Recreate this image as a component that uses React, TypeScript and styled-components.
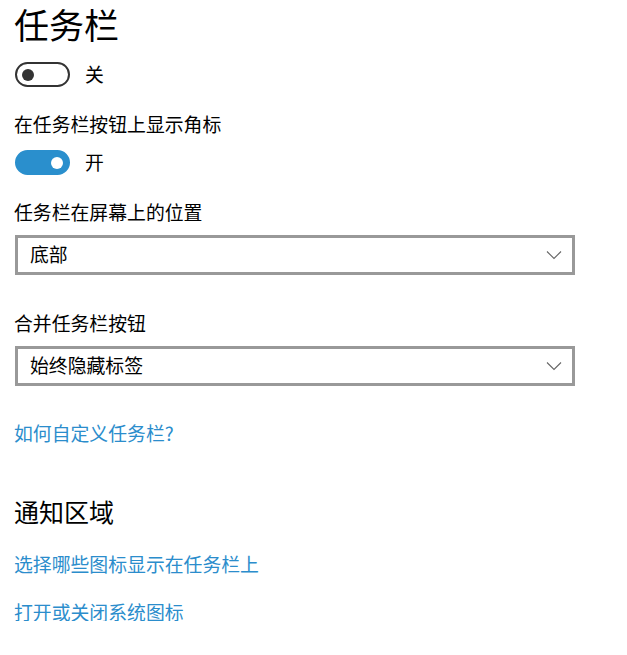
import React from "react";
import styled, { createGlobalStyle } from "styled-components";

const Global = createGlobalStyle`
  html, body { margin: 0; padding: 0; background: #fff; }
  body { font-family: "Noto Sans CJK SC", "Noto Sans", sans-serif; color: #000; }
`;

const Page = styled.div`
  display: flex;
  flex-direction: column;
  align-items: flex-start;
  padding: 0 0 0 14px;
  width: 627px;
  box-sizing: border-box;
`;

const Title = styled.h1<{ $size: number; $lh: number; $mt: number }>`
  margin: ${(p) => p.$mt}px 0 0 0;
  font-size: ${(p) => p.$size}px;
  line-height: ${(p) => p.$lh}px;
  font-weight: 400;
`;

const Label = styled.div<{ $mt: number }>`
  margin-top: ${(p) => p.$mt}px;
  font-size: 18.85px;
  line-height: 19px;
`;

const ToggleRow = styled.div<{ $mt: number }>`
  margin-top: ${(p) => p.$mt}px;
  display: flex;
  align-items: center;
  gap: 15px;
  padding-left: 1px;
  font-size: 18.85px;
  line-height: 19px;
`;

const ToggleText = styled.span`
  position: relative;
  top: -1px;
`;

const Track = styled.div<{ $on: boolean }>`
  width: 55px;
  height: 25px;
  box-sizing: border-box;
  border-radius: 13px;
  border: 2px solid ${(p) => (p.$on ? "#2a8fcd" : "#333")};
  background: ${(p) => (p.$on ? "#2a8fcd" : "#fff")};
  display: flex;
  align-items: center;
  justify-content: ${(p) => (p.$on ? "flex-end" : "flex-start")};
  padding: 0 5px;
`;

const Knob = styled.div<{ $on: boolean }>`
  width: 12px;
  height: 12px;
  border-radius: 50%;
  background: ${(p) => (p.$on ? "#fff" : "#333")};
`;

const Select = styled.div<{ $mt: number }>`
  margin-top: ${(p) => p.$mt}px;
  margin-left: 1px;
  width: 560px;
  height: 40px;
  box-sizing: border-box;
  border: 3px solid #999;
  display: flex;
  align-items: center;
  justify-content: space-between;
  padding: 0 10px 3px 12px;
  font-size: 18.85px;
  line-height: 19px;
`;

const Link = styled.a<{ $mt: number }>`
  margin-top: ${(p) => p.$mt}px;
  font-size: 18.85px;
  line-height: 19px;
  color: #2b8dcc;
  text-decoration: none;
`;

const Chevron = () => (
  <svg width="16" height="10" viewBox="0 0 16 10" style={{ marginTop: 3 }}>
    <path d="M1 1.5 L8 8.5 L15 1.5" fill="none" stroke="#666" strokeWidth="1.1" />
  </svg>
);

const Toggle = ({ on, mt, text }: { on: boolean; mt: number; text: string }) => (
  <ToggleRow $mt={mt}>
    <Track $on={on}>
      <Knob $on={on} />
    </Track>
    <ToggleText>{text}</ToggleText>
  </ToggleRow>
);

export default function App() {
  return (
    <>
      <Global />
      <Page>
        <Title $size={35} $lh={41} $mt={3}>任务栏</Title>
        <Toggle on={false} mt={18} text="关" />
        <Label $mt={27}>在任务栏按钮上显示角标</Label>
        <Toggle on={true} mt={17} text="开" />
        <Label $mt={27}>任务栏在屏幕上的位置</Label>
        <Select $mt={14}>
          <span>底部</span>
          <Chevron />
        </Select>
        <Label $mt={38}>合并任务栏按钮</Label>
        <Select $mt={14}>
          <span>始终隐藏标签</span>
          <Chevron />
        </Select>
        <Link $mt={37} href="#">如何自定义任务栏?</Link>
        <Title $size={25} $lh={30} $mt={54}>通知区域</Title>
        <Link $mt={28} href="#">选择哪些图标显示在任务栏上</Link>
        <Link $mt={29} href="#">打开或关闭系统图标</Link>
      </Page>
    </>
  );
}
